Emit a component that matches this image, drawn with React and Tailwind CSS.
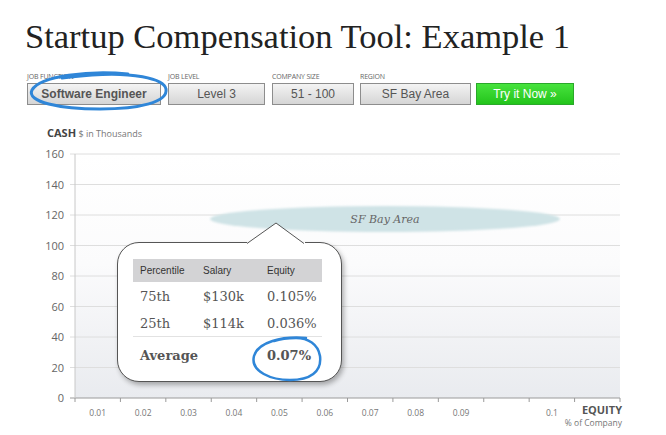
import React from 'react';

const yTicks = [160, 140, 120, 100, 80, 60, 40, 20, 0];
const xLabels = ['0.01', '0.02', '0.03', '0.04', '0.05', '0.06', '0.07', '0.08', '0.09', '', '0.1'];

const FilterButton = ({ label, value, bold, width }) => (
    <div className="flex flex-col">
        <span className="text-[7px] leading-[10px] text-[#666] font-['Open_Sans',sans-serif] tracking-tight mb-[1px]">{label}</span>
        <div
            className={`${width} h-[22px] flex items-center justify-center border border-[#8d8d8d] bg-gradient-to-b from-[#f4f4f4] to-[#d5d5d5] text-[12px] text-[#555] font-['Liberation_Sans',Arial,sans-serif] ${bold ? 'font-bold' : ''}`}
        >
            {value}
        </div>
    </div>
);

const Chart = () => {
    const top = 154;
    const step = 30.5;
    const left = 75;
    const right = 620;
    const xStep = (right - left) / 12;

    return (
        <svg width="666" height="315" viewBox="0 120 666 315" className="block">
            <defs>
                <linearGradient id="plotBg" x1="0" y1="0" x2="0" y2="1">
                    <stop offset="0" stopColor="#ffffff" />
                    <stop offset="0.45" stopColor="#fbfbfc" />
                    <stop offset="1" stopColor="#e9ebef" />
                </linearGradient>
                <filter id="soft" x="-10%" y="-50%" width="120%" height="200%">
                    <feGaussianBlur stdDeviation="0.8" />
                </filter>
            </defs>

            {/* axis title */}
            <text x="47" y="137" fontFamily="Open Sans, sans-serif" fill="#444">
                <tspan fontSize="11" fontWeight="700">CASH</tspan>
                <tspan fontSize="9" fill="#777"> $ in Thousands</tspan>
            </text>

            {/* plot area */}
            <rect x={left} y={top} width={right - left} height={step * 8} fill="url(#plotBg)" />

            {yTicks.map((v, i) => (
                <g key={v}>
                    <line x1="70" x2={right} y1={top + i * step} y2={top + i * step} stroke={v === 0 ? '#9a9a9a' : '#dedede'} strokeWidth="1" />
                    <text x="64" y={top + i * step + 4} textAnchor="end" fontSize="11" fontFamily="Open Sans, sans-serif" fill="#666">
                        {v}
                    </text>
                </g>
            ))}
            <line x1={left} x2={left} y1={top} y2={top + step * 8} stroke="#c8c8c8" />

            {/* x ticks */}
            {Array.from({ length: 13 }).map((_, i) => (
                <line key={i} x1={left + i * xStep} x2={left + i * xStep} y1="398" y2="402" stroke="#9a9a9a" />
            ))}
            {xLabels.map((l, i) => (
                <text key={i} x={left + (i + 0.5) * xStep} y="416" textAnchor="middle" fontSize="8.5" fontFamily="Open Sans, sans-serif" fill="#777">
                    {l}
                </text>
            ))}
            <text x="622" y="414" textAnchor="end" fontSize="11" fontWeight="700" fontFamily="Open Sans, sans-serif" fill="#555">EQUITY</text>
            <text x="622" y="426" textAnchor="end" fontSize="8.5" fontFamily="Open Sans, sans-serif" fill="#777">% of Company</text>

            {/* region band */}
            <ellipse cx="385" cy="219" rx="175" ry="13" fill="#cfe3e6" filter="url(#soft)" />
            <text x="385" y="223" textAnchor="middle" fontSize="11" fontStyle="italic" fontFamily="DejaVu Serif, serif" fill="#666">SF Bay Area</text>
        </svg>
    );
};

const App = () => {
    return (
        <div className="relative w-[666px] h-[435px] overflow-hidden bg-white">
            {/* Title */}
            <h1 className="pl-[25px] pt-[16px] h-[67px] text-[34.5px] leading-[40px] text-[#222] font-['Liberation_Serif',Georgia,serif]">
                Startup Compensation Tool: Example 1
            </h1>

            {/* Filters */}
            <div className="flex items-end pl-[27px] h-[38px]">
                <FilterButton label="JOB FUNCTION" value="Software Engineer" bold width="w-[134px]" />
                <div className="w-[7px]" />
                <FilterButton label="JOB LEVEL" value="Level 3" width="w-[97px]" />
                <div className="w-[7px]" />
                <FilterButton label="COMPANY SIZE" value="51 - 100" width="w-[82px]" />
                <div className="w-[6px]" />
                <FilterButton label="REGION" value="SF Bay Area" width="w-[111px]" />
                <div className="w-[5px]" />
                <div className="w-[98px] h-[22px] flex items-center justify-center border border-[#2aa82a] bg-gradient-to-b from-[#46e33c] to-[#22c41a] text-[12px] text-white font-['Liberation_Sans',Arial,sans-serif]">
                    Try it Now »
                </div>
            </div>

            {/* Chart */}
            <div className="mt-[15px]">
                <Chart />
            </div>

            {/* Callout tooltip */}
            <div className="absolute left-[117px] top-[242px] w-[225px] h-[140px] rounded-[22px] border border-[#555] bg-white shadow-[2px_3px_5px_rgba(0,0,0,0.3)] pl-[15px] pr-[19px] pt-[16px]">
                <svg className="absolute left-[129px] top-[-21px]" width="58" height="23" viewBox="0 0 58 23">
                    <path d="M0 22 L29 1 L57 22 Z" fill="white" />
                    <rect x="0" y="20" width="58" height="3" fill="white" />
                    <path d="M0 21.5 L29 1 L57 21.5" fill="none" stroke="#555" strokeWidth="1" />
                </svg>
                <div className="grid grid-cols-[63px_64px_1fr] items-center h-[23px] bg-[#d3d3d5] pl-[7px] text-[10px] text-[#333] font-['Liberation_Sans',Arial,sans-serif]">
                    <span>Percentile</span>
                    <span>Salary</span>
                    <span>Equity</span>
                </div>
                <div className="grid grid-cols-[63px_64px_1fr] items-center h-[29px] pl-[7px] text-[13px] text-[#555] font-['DejaVu_Serif',Georgia,serif]">
                    <span>75th</span>
                    <span>$130k</span>
                    <span>0.105%</span>
                </div>
                <div className="grid grid-cols-[63px_64px_1fr] items-center h-[26px] pl-[7px] text-[13px] text-[#555] font-['DejaVu_Serif',Georgia,serif] border-b border-[#e2e2e2]">
                    <span>25th</span>
                    <span>$114k</span>
                    <span>0.036%</span>
                </div>
                <div className="grid grid-cols-[127px_1fr] items-center h-[38px] pl-[7px] text-[13px] font-bold text-[#555] font-['DejaVu_Serif',Georgia,serif]">
                    <span>Average</span>
                    <span>0.07%</span>
                </div>
            </div>

            {/* Hand-drawn highlight marks */}
            <svg className="absolute left-0 top-0 pointer-events-none" width="666" height="435">
                <path
                    d="M128 74 C 90 70, 40 76, 32 90 C 26 102, 60 109, 100 109 C 140 109, 168 102, 166 89 C 164 78, 130 72, 92 75 C 80 76, 70 77, 62 78"
                    fill="none"
                    stroke="#2f86d8"
                    strokeWidth="3"
                    strokeLinecap="round"
                />
                <path
                    d="M306 338 C 282 336, 258 342, 254 356 C 250 372, 272 380, 290 380 C 310 380, 322 372, 320 356 C 318 344, 308 338, 296 338 C 288 338, 280 339, 274 341"
                    fill="none"
                    stroke="#2f86d8"
                    strokeWidth="2.5"
                    strokeLinecap="round"
                />
            </svg>
        </div>
    );
};

export default App;
